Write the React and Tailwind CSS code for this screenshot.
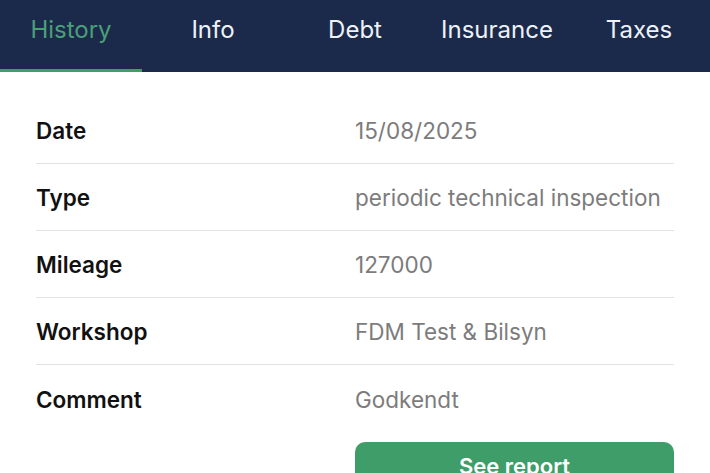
import { useState } from 'react'

const TABS = ['History', 'Info', 'Debt', 'Insurance', 'Taxes']

const ROWS = [
  { label: 'Date', value: '15/08/2025' },
  { label: 'Type', value: 'periodic technical inspection' },
  { label: 'Mileage', value: '127000' },
  { label: 'Workshop', value: 'FDM Test & Bilsyn' },
  { label: 'Comment', value: 'Godkendt' },
]

export default function App() {
  const [active, setActive] = useState(0)

  return (
    <div className="w-[710px] h-[473px] overflow-hidden bg-white" style={{ fontFamily: 'Inter, "Liberation Sans", sans-serif' }}>
      {/* Tabs */}
      <div className="flex h-[72px] bg-[#1b2a4a]">
        {TABS.map((t, i) => (
          <button
            key={t}
            onClick={() => setActive(i)}
            className={`relative flex-1 h-full text-[24px] pb-[13px] ${i === active ? 'text-[#4a9f78]' : 'text-[#eef1f6]'}`}
          >
            {t}
            {i === active && <span className="absolute left-0 right-0 bottom-0 h-[3px] bg-[#3f9e6a]"></span>}
          </button>
        ))}
      </div>

      {/* Details */}
      <div className="px-[36px] pt-[25px]">
        {ROWS.map((r, i) => (
          <div
            key={r.label}
            className={`flex items-center h-[67px] pt-[2px] ${i < ROWS.length - 1 ? 'border-b border-[#e2e2e2]' : ''}`}
          >
            <span className="w-[319px] text-[22.5px] font-semibold text-[#111]">{r.label}</span>
            <span className="text-[22.5px] text-[#7c7c7c]">{r.value}</span>
          </div>
        ))}
        <div className="flex mt-[10px]">
          <div className="w-[319px]"></div>
          <button className="w-[319px] h-[48px] rounded-[10px] bg-[#3e9d68] text-white text-[22px] font-semibold">
            See report
          </button>
        </div>
      </div>
    </div>
  )
}
